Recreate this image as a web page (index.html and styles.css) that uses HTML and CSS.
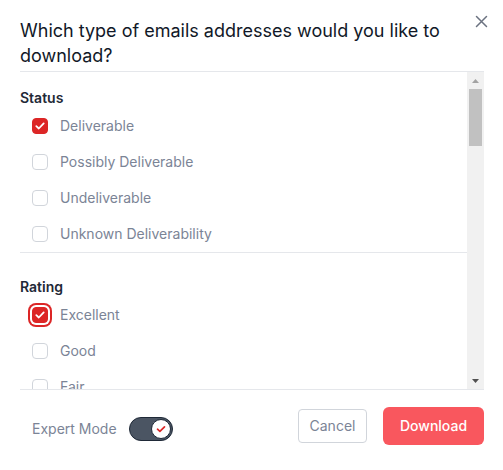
FILE: index.html
```html
<!DOCTYPE html>
<html>
<head>
<meta charset="utf-8">
<link rel="stylesheet" href="styles.css">
</head>
<body>
<div class="modal">
  <button class="close" aria-label="Close">
    <svg width="13" height="13" viewBox="0 0 13 13"><path d="M1.5 1.5 L11.5 11.5 M11.5 1.5 L1.5 11.5" stroke="#6b7280" stroke-width="1.5" stroke-linecap="round" fill="none"/></svg>
  </button>
  <h2 class="title">Which type of emails addresses would you like to download?</h2>
  <div class="scroll-wrap">
    <div class="scroll">
      <div class="section first">
        <div class="heading">Status</div>
        <label class="row"><span class="box checked"><svg width="10" height="8" viewBox="0 0 10 8"><path d="M1.3 4.2 L3.8 6.5 L8.7 1.4" stroke="#fff" stroke-width="1.8" fill="none" stroke-linecap="round" stroke-linejoin="round"/></svg></span><span class="lbl">Deliverable</span></label>
        <label class="row"><span class="box"></span><span class="lbl">Possibly Deliverable</span></label>
        <label class="row"><span class="box"></span><span class="lbl">Undeliverable</span></label>
        <label class="row"><span class="box"></span><span class="lbl">Unknown Deliverability</span></label>
      </div>
      <div class="section second">
        <div class="heading">Rating</div>
        <label class="row"><span class="box checked focus"><svg width="10" height="8" viewBox="0 0 10 8"><path d="M1.3 4.2 L3.8 6.5 L8.7 1.4" stroke="#fff" stroke-width="1.8" fill="none" stroke-linecap="round" stroke-linejoin="round"/></svg></span><span class="lbl">Excellent</span></label>
        <label class="row"><span class="box"></span><span class="lbl">Good</span></label>
        <label class="row"><span class="box"></span><span class="lbl">Fair</span></label>
      </div>
    </div>
    <div class="scrollbar">
      <span class="sb-btn"><svg width="7" height="4" viewBox="0 0 7 4"><polygon points="0,4 3.5,0 7,4" fill="#a3a3a3"/></svg></span>
      <span class="sb-track"><span class="sb-thumb"></span></span>
      <span class="sb-btn"><svg width="7" height="4" viewBox="0 0 7 4"><polygon points="0,0 7,0 3.5,4" fill="#505050"/></svg></span>
    </div>
  </div>
  <div class="footer">
    <div class="expert">
      <span class="lbl">Expert Mode</span>
      <span class="toggle"><span class="knob"><svg width="10" height="8" viewBox="0 0 10 8"><path d="M1.5 4.2 L3.9 6.3 L8.5 1.8" stroke="#dc2626" stroke-width="1.7" fill="none" stroke-linecap="round" stroke-linejoin="round"/></svg></span></span>
    </div>
    <div class="actions">
      <button class="btn cancel">Cancel</button>
      <button class="btn download">Download</button>
    </div>
  </div>
</div>
</body>
</html>
```
FILE: styles.css
```css
* { box-sizing: border-box; }
html, body { margin: 0; padding: 0; background: #fff; }
body { font-family: Inter, "Noto Sans", sans-serif; }
.modal {
  position: relative;
  width: 503px;
  height: 470px;
  padding: 0 19px 0 20px;
  background: #fff;
}
.close {
  position: absolute;
  top: 15px;
  right: 15px;
  width: 13px;
  height: 13px;
  padding: 0;
  border: 0;
  background: none;
  display: flex;
}
.title {
  margin: 0;
  padding: 18px 24px 3px 0;
  font-size: 18px;
  line-height: 25px;
  font-weight: 400;
  color: #111827;
  border-bottom: 1px solid #e5e7eb;
}
.scroll-wrap {
  display: flex;
  height: 318px;
  border-bottom: 1px solid #e5e7eb;
}
.scroll {
  flex: 1;
  overflow: hidden;
}
.scrollbar {
  width: 17px;
  flex: none;
  background: #f1f1f1;
  display: flex;
  flex-direction: column;
}
.sb-btn {
  height: 17px;
  display: flex;
  align-items: center;
  justify-content: center;
  flex: none;
}
.sb-track {
  flex: 1;
  display: flex;
  flex-direction: column;
  padding: 0 2px;
}
.sb-thumb {
  height: 57px;
  background: #c1c1c1;
}
.section.first { padding-top: 16px; border-bottom: 1px solid #e5e7eb; }
.section.second { padding-top: 24px; }
.heading {
  font-size: 14px;
  line-height: 20px;
  font-weight: 600;
  color: #1f2937;
}
.row {
  display: flex;
  align-items: center;
  height: 36px;
  padding-left: 12px;
  gap: 12px;
}
.box {
  width: 16px;
  height: 16px;
  border: 1px solid #d1d5db;
  border-radius: 4px;
  background: #fff;
  display: flex;
  align-items: center;
  justify-content: center;
  flex: none;
}
.box.checked { background: #dc2626; border-color: #dc2626; }
.box.focus { box-shadow: 0 0 0 2px #fff, 0 0 0 4px #dc2626; }
.lbl {
  font-size: 14px;
  line-height: 20px;
  color: #7b8496;
}
.footer {
  display: flex;
  justify-content: space-between;
  align-items: flex-start;
  padding-top: 17px;
}
.expert {
  display: flex;
  align-items: center;
  gap: 12px;
  padding-left: 12px;
  padding-top: 10px;
}
.toggle {
  width: 44px;
  height: 24px;
  border-radius: 12px;
  background: #4b5563;
  border: 1px solid #1f2937;
  display: flex;
  align-items: center;
  justify-content: flex-end;
  padding-right: 1px;
}
.knob {
  width: 20px;
  height: 20px;
  border-radius: 50%;
  background: #fff;
  border: 1px solid #1f2937;
  display: flex;
  align-items: center;
  justify-content: center;
}
.actions {
  display: flex;
  align-items: center;
  gap: 16px;
  height: 38px;
}
.btn {
  font-family: Inter, "Noto Sans", sans-serif;
  font-size: 14px;
  line-height: 20px;
  cursor: pointer;
}
.cancel {
  height: 34px;
  width: 69px;
  padding: 0;
  border: 1px solid #d1d5db;
  border-radius: 4px;
  background: #fff;
  color: #7b8496;
}
.download {
  height: 38px;
  width: 101px;
  padding: 0;
  border: 0;
  border-radius: 6px;
  background: #f9575e;
  color: #fff;
  font-weight: 500;
}
```
